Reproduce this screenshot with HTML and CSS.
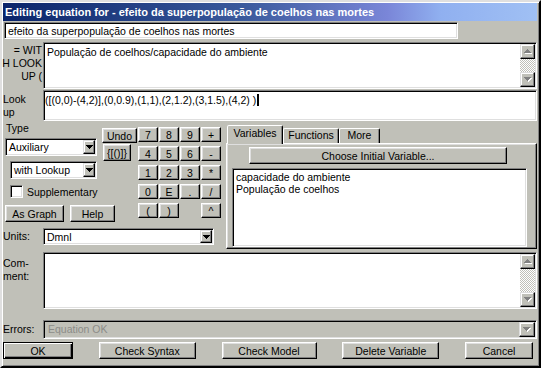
FILE: index.html
```html
<!DOCTYPE html>
<html lang="pt">
<head>
    <meta charset="UTF-8">
    <title>Editing equation</title>
    <link rel="stylesheet" href="styles.css">
</head>
<body>
    <div class="window">
        <div class="titlebar">Editing equation for - efeito da superpopulação de coelhos nas mortes</div>

        <div class="name-row">
            <div class="field name-field">efeito da superpopulação de coelhos nas mortes</div>
        </div>

        <div class="row eq-row">
            <div class="label eq-label">= WIT<br>H LOOK<br>UP (</div>
            <div class="field area">
                <div class="area-text">População de coelhos/capacidade do ambiente</div>
                <div class="vscroll">
                    <div class="sbtn"><svg width="8" height="5" viewBox="0 0 8 5"><path transform="translate(1,1)" d="M3 0h1v1h1v1h1v1h1v1H0V3h1V2h1V1h1z" fill="#fff"/><path d="M3 0h1v1h1v1h1v1h1v1H0V3h1V2h1V1h1z" fill="#808080"/></svg></div>
                    <div class="track"></div>
                    <div class="sbtn"><svg width="8" height="5" viewBox="0 0 8 5"><path transform="translate(1,1)" d="M0 0h7v1h-1v1h-1v1h-1v1h-1v-1h-1v-1h-1v-1h-1z" fill="#fff"/><path d="M0 0h7v1h-1v1h-1v1h-1v1h-1v-1h-1v-1h-1v-1h-1z" fill="#808080"/></svg></div>
                </div>
            </div>
        </div>

        <div class="row lookup-row">
            <div class="label lookup-label">Look<br>up</div>
            <div class="field lookup-field">([(0,0)-(4,2)],(0,0.9),(1,1),(2,1.2),(3,1.5),(4,2) )<span class="caret"></span></div>
        </div>

        <div class="mid">
            <div class="left-pane">
                <div class="controls">
                    <div class="type-box">
                        <div class="type-label">Type</div>
                        <div class="field combo aux">
                            <span class="combo-text">Auxiliary</span>
                            <span class="drop"><svg width="7" height="4" viewBox="0 0 7 4"><path d="M0 0h7v1h-1v1h-1v1h-1v1h-1v-1h-1v-1h-1v-1h-1z"/></svg></span>
                        </div>
                        <div class="field combo sub">
                            <span class="combo-text">with Lookup</span>
                            <span class="drop"><svg width="7" height="4" viewBox="0 0 7 4"><path d="M0 0h7v1h-1v1h-1v1h-1v1h-1v-1h-1v-1h-1v-1h-1z"/></svg></span>
                        </div>
                        <div class="check-row"><span class="checkbox"></span>Supplementary</div>
                    </div>

                    <div class="undo-box">
                        <button class="btn undo">Undo</button>
                        <button class="btn brackets">{[()]}</button>
                    </div>

                    <div class="keypad">
                        <button class="btn">7</button><button class="btn">8</button><button class="btn">9</button><button class="btn">+</button>
                        <button class="btn">4</button><button class="btn">5</button><button class="btn">6</button><button class="btn">-</button>
                        <button class="btn">1</button><button class="btn">2</button><button class="btn">3</button><button class="btn">*</button>
                        <button class="btn">0</button><button class="btn">E</button><button class="btn">.</button><button class="btn">/</button>
                        <button class="btn">(</button><button class="btn">)</button><span></span><button class="btn">^</button>
                    </div>

                    <div class="graph-box">
                        <button class="btn as-graph">As Graph</button>
                        <button class="btn help">Help</button>
                    </div>
                </div>

                <div class="row units-row">
                    <div class="label">Units:</div>
                    <div class="field combo units">
                        <span class="combo-text">Dmnl</span>
                        <span class="drop"><svg width="7" height="4" viewBox="0 0 7 4"><path d="M0 0h7v1h-1v1h-1v1h-1v1h-1v-1h-1v-1h-1v-1h-1z"/></svg></span>
                    </div>
                </div>
            </div>

            <div class="tabs">
                <div class="tab-strip">
                    <div class="tab active">Variables</div>
                    <div class="tab">Functions</div>
                    <div class="tab">More</div>
                </div>
                <div class="tab-body">
                    <button class="btn choose">Choose Initial Variable...</button>
                    <div class="field list">
                        <div>capacidade do ambiente</div>
                        <div>População de coelhos</div>
                    </div>
                </div>
            </div>
        </div>

        <div class="row comment-row">
            <div class="label comment-label">Com-<br>ment:</div>
            <div class="field area">
                <div class="area-text"></div>
                <div class="vscroll">
                    <div class="sbtn"><svg width="8" height="5" viewBox="0 0 8 5"><path transform="translate(1,1)" d="M3 0h1v1h1v1h1v1h1v1H0V3h1V2h1V1h1z" fill="#fff"/><path d="M3 0h1v1h1v1h1v1h1v1H0V3h1V2h1V1h1z" fill="#808080"/></svg></div>
                    <div class="track"></div>
                    <div class="sbtn"><svg width="8" height="5" viewBox="0 0 8 5"><path transform="translate(1,1)" d="M0 0h7v1h-1v1h-1v1h-1v1h-1v-1h-1v-1h-1v-1h-1z" fill="#fff"/><path d="M0 0h7v1h-1v1h-1v1h-1v1h-1v-1h-1v-1h-1v-1h-1z" fill="#808080"/></svg></div>
                </div>
            </div>
        </div>

        <div class="row errors-row">
            <div class="label errors-label">Errors:</div>
            <div class="field combo errors">
                <span class="combo-text">Equation OK</span>
                <span class="drop wide"><svg width="8" height="5" viewBox="0 0 8 5"><path transform="translate(1,1)" d="M0 0h7v1h-1v1h-1v1h-1v1h-1v-1h-1v-1h-1v-1h-1z" fill="#fff"/><path d="M0 0h7v1h-1v1h-1v1h-1v1h-1v-1h-1v-1h-1v-1h-1z" fill="#808080"/></svg></span>
            </div>
        </div>

        <div class="button-row">
            <button class="btn default ok">OK</button>
            <button class="btn check-syntax">Check Syntax</button>
            <button class="btn check-model">Check Model</button>
            <button class="btn delete">Delete Variable</button>
            <button class="btn cancel">Cancel</button>
        </div>
    </div>
</body>
</html>
```

FILE: styles.css
```css
* {
    box-sizing: border-box;
}

body {
    margin: 0;
    font-family: "Liberation Sans", Arial, sans-serif;
    font-size: 10.5px;
    color: #000;
    background-color: #c0c0b8;
}

.window {
    width: 541px;
    height: 368px;
    display: flex;
    flex-direction: column;
    background-color: #c0c0b8;
    border: 2px solid;
    border-color: #dfdfdf #000 #000 #dfdfdf;
    box-shadow: inset 1px 1px #fff, inset -1px -1px #808080;
    padding: 1px 2px 0 1px;
}

.titlebar {
    height: 18px;
    line-height: 18px;
    margin-bottom: 1px;
    padding-left: 2px;
    color: #fff;
    font-weight: bold;
    font-size: 11px;
    white-space: nowrap;
    background: linear-gradient(90deg, #0a246a 0%, #3a5a9c 45%, #7a86d8 72%, #90b0f0 82%, #a0c0f4 100%);
}

/* sunken white box */
.field {
    background-color: #fff;
    border: 1px solid;
    border-color: #808080 #fff #fff #808080;
    box-shadow: inset 1px 1px #000, inset -1px -1px #dfdfdf;
}

.btn {
    font: inherit;
    color: #000;
    padding: 0;
    margin: 0;
    background-color: #c0c0b8;
    border: 1px solid;
    border-color: #fff #000 #000 #fff;
    box-shadow: inset -1px -1px #808080, inset 1px 1px #dfdfdf;
    cursor: pointer;
}

.btn.default {
    border-color: #000;
    box-shadow: inset 1px 1px #fff, inset -1px -1px #000, inset -2px -2px #808080;
}

.row {
    display: flex;
}

.label {
    width: 40px;
    flex-shrink: 0;
    line-height: 13px;
}

.name-row {
    padding-left: 1px;
    margin-bottom: 3px;
}

.name-field {
    width: 454px;
    height: 17px;
    line-height: 14px;
    padding: 1px 3px 0;
}

.eq-row {
    height: 47px;
    margin-bottom: 1px;
}

.eq-label {
    text-align: right;
    padding-top: 2px;
    padding-right: 1px;
    margin-left: -2px;
    width: 42px;
}

.area {
    flex: 1;
    display: flex;
    padding: 1px;
}

.area-text {
    flex: 1;
    padding: 2px 2px;
    line-height: 12px;
}

.vscroll {
    width: 15px;
    display: flex;
    flex-direction: column;
}

.sbtn {
    height: 15px;
    display: flex;
    align-items: center;
    justify-content: center;
    background-color: #c0c0b8;
    border: 1px solid;
    border-color: #dfdfdf #000 #000 #dfdfdf;
    box-shadow: inset -1px -1px #808080, inset 1px 1px #fff;
}

.track {
    flex: 1;
    background: repeating-conic-gradient(#c0c0b8 0% 25%, #fff 0% 50%) 0 0 / 2px 2px;
}

.lookup-row {
    height: 31px;
}

.lookup-label {
    padding-top: 3px;
}

.lookup-field {
    flex: 1;
    padding: 3px 1px 0;
    line-height: 12px;
    white-space: nowrap;
}

.caret {
    display: inline-block;
    width: 2px;
    height: 12px;
    margin-left: 1px;
    vertical-align: top;
    background-color: #000;
}

/* middle block: type controls, keypad, tabs */
.mid {
    display: flex;
    height: 128px;
}

.left-pane {
    width: 223px;
    flex-shrink: 0;
}

.controls {
    display: grid;
    grid-template-columns: 97px 36px 83px;
    grid-template-rows: 84px 17px;
    padding-left: 2px;
}

.type-box {
    grid-column: 1;
    grid-row: 1;
    display: flex;
    flex-direction: column;
}

.type-label {
    line-height: 13px;
    margin-top: 1px;
    padding-left: 1px;
}

.combo {
    display: flex;
    align-items: stretch;
    padding: 1px;
}

.combo-text {
    flex: 1;
    padding-left: 2px;
    line-height: 14px;
    white-space: nowrap;
    overflow: hidden;
}

.drop {
    width: 12px;
    display: flex;
    align-items: center;
    justify-content: center;
    background-color: #c0c0b8;
    border: 1px solid;
    border-color: #dfdfdf #000 #000 #dfdfdf;
    box-shadow: inset -1px -1px #808080, inset 1px 1px #fff;
}

.drop.wide {
    width: 16px;
}

.aux {
    width: 92px;
    height: 18px;
    margin-top: 3px;
}

.sub {
    width: 87px;
    height: 18px;
    margin-top: 5px;
    margin-left: 5px;
}

.check-row {
    display: flex;
    align-items: center;
    margin-top: 6px;
    margin-left: 5px;
    height: 13px;
    white-space: nowrap;
}

.checkbox {
    width: 13px;
    height: 13px;
    margin-right: 4px;
    background-color: #fff;
    border: 1px solid;
    border-color: #808080 #fff #fff #808080;
    box-shadow: inset 1px 1px #000, inset -1px -1px #dfdfdf;
}

.undo-box {
    grid-column: 2;
    grid-row: 1;
    display: flex;
    flex-direction: column;
    align-items: flex-start;
    padding-top: 7px;
}

.undo {
    width: 35px;
    height: 15px;
}

.brackets {
    width: 28px;
    height: 17px;
    margin-top: 1px;
    margin-left: 1px;
}

.keypad {
    grid-column: 3;
    grid-row: 1 / 3;
    display: grid;
    grid-template-columns: repeat(4, 20px);
    grid-auto-rows: 15px;
    column-gap: 1px;
    row-gap: 4px;
    padding-top: 6px;
}

.graph-box {
    grid-column: 1 / 3;
    grid-row: 2;
    display: flex;
}

.as-graph {
    width: 59px;
    height: 17px;
}

.help {
    width: 45px;
    height: 17px;
    margin-left: 6px;
}

.units-row {
    margin-top: 6px;
    height: 17px;
}

.units-row .label {
    line-height: 17px;
}

.units {
    width: 171px;
}

/* tab control */
.tabs {
    flex: 1;
    display: flex;
    flex-direction: column;
    padding-top: 4px;
}

.tab-strip {
    display: flex;
    align-items: flex-end;
    height: 18px;
    padding-left: 1px;
}

.tab {
    height: 15px;
    line-height: 13px;
    text-align: center;
    border: 1px solid;
    border-bottom: none;
    border-color: #fff #000 transparent #fff;
    border-radius: 2px 2px 0 0;
    box-shadow: inset -1px 0 #808080;
}

.tab.active {
    height: 19px;
    margin-bottom: -1px;
    position: relative;
    z-index: 1;
    background-color: #c0c0b8;
    line-height: 14px;
    width: 56px;
}

.tab:nth-child(2) {
    width: 56px;
}

.tab:nth-child(3) {
    width: 41px;
}

.tab-body {
    flex: 1;
    display: flex;
    flex-direction: column;
    align-items: flex-start;
    border: 1px solid;
    border-color: #fff #000 #000 #fff;
    box-shadow: inset -1px -1px #808080, inset 1px 1px #dfdfdf;
}

.choose {
    width: 258px;
    height: 17px;
    margin-top: 3px;
    margin-left: 22px;
}

.list {
    width: 295px;
    flex: 1;
    margin-top: 4px;
    margin-left: 5px;
    margin-bottom: 1px;
    padding: 2px 3px;
    line-height: 12px;
}

.comment-row {
    margin-top: 3px;
    height: 57px;
}

.comment-label {
    padding-top: 5px;
}

.errors-row {
    margin-top: 11px;
    height: 19px;
}

.errors-label {
    line-height: 19px;
}

.errors {
    flex: 1;
    background-color: #c0c0b8;
}

.errors .combo-text {
    color: #8c8c88;
    line-height: 15px;
    padding-left: 3px;
}

.button-row {
    display: flex;
    justify-content: space-between;
    margin-top: 3px;
    padding-right: 4px;
}

.button-row .btn {
    height: 17px;
}

.ok {
    width: 70px;
}

.check-syntax {
    width: 97px;
}

.check-model {
    width: 95px;
}

.delete {
    width: 97px;
}

.cancel {
    width: 68px;
}
```
